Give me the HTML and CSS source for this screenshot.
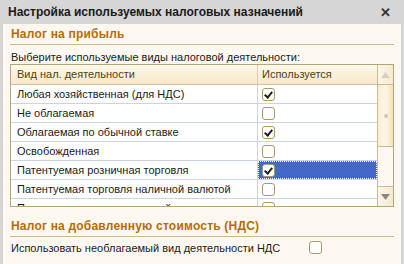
FILE: index.html
```html
<!DOCTYPE html>
<html>
<head>
<meta charset="utf-8">
<link rel="stylesheet" href="styles.css">
</head>
<body>
<div class="window">
  <div class="titlebar">
    <span class="title">Настройка используемых налоговых назначений</span>
    <span class="close">✕</span>
  </div>
  <div class="content">
    <div class="section-head">Налог на прибыль</div>
    <div class="hint">Выберите используемые виды налоговой деятельности:</div>
    <div class="table">
      <div class="grid">
        <div class="row head">
          <div class="c1">Вид нал. деятельности</div>
          <div class="c2">Используется</div>
        </div>
        <div class="row">
          <div class="c1">Любая хозяйственная (для НДС)</div>
          <div class="c2"><span class="cb on"></span></div>
        </div>
        <div class="row">
          <div class="c1">Не облагаемая</div>
          <div class="c2"><span class="cb"></span></div>
        </div>
        <div class="row">
          <div class="c1">Облагаемая по обычной ставке</div>
          <div class="c2"><span class="cb on"></span></div>
        </div>
        <div class="row">
          <div class="c1">Освобожденная</div>
          <div class="c2"><span class="cb"></span></div>
        </div>
        <div class="row">
          <div class="c1">Патентуемая розничная торговля</div>
          <div class="c2 sel"><span class="cb on"></span></div>
        </div>
        <div class="row">
          <div class="c1">Патентуемая торговля наличной валютой</div>
          <div class="c2"><span class="cb"></span></div>
        </div>
        <div class="row">
          <div class="c1">Патентуемая торговля прочей</div>
          <div class="c2"><span class="cb"></span></div>
        </div>
      </div>
      <div class="scrollbar">
        <div class="sb-btn up"><svg width="9" height="6" viewBox="0 0 9 6"><path d="M0 6 L4.5 0 L9 6 Z" fill="#d8d0bc"/></svg></div>
        <div class="sb-thumb"><span class="grip"></span></div>
        <div class="sb-track"></div>
        <div class="sb-btn down"><svg width="9" height="6" viewBox="0 0 9 6"><path d="M0 0 L4.5 6 L9 0 Z" fill="#8a8680"/></svg></div>
      </div>
    </div>
    <div class="section-head second">Налог на добавленную стоимость (НДС)</div>
    <div class="option">
      <span class="opt-label">Использовать необлагаемый вид деятельности НДС</span>
      <span class="cb"></span>
    </div>
  </div>
</div>
</body>
</html>
```
FILE: styles.css
```css
html, body {
  margin: 0;
  padding: 0;
}
body {
  width: 404px;
  height: 264px;
  overflow: hidden;
  background: #d6d6d6;
  font-family: "Liberation Sans", Arial, sans-serif;
  font-size: 11px;
  color: #1c1a14;
}
.window {
  width: 404px;
  height: 264px;
  display: flex;
  flex-direction: column;
}
.titlebar {
  height: 24px;
  flex: none;
  display: flex;
  align-items: center;
  justify-content: space-between;
  padding: 0 13px 0 8px;
  background: #d6d6d6;
}
.title {
  font-weight: bold;
  font-size: 12px;
  color: #1a1a1a;
}
.close {
  font-size: 13px;
  font-weight: bold;
  color: #333;
}
.content {
  flex: 1;
  margin: 0 3px;
  background: #fdf9f2;
  padding: 0 7px 0 7px;
}
.section-head {
  height: 19px;
  padding-top: 1px;
  line-height: 19px;
  font-weight: bold;
  font-size: 12px;
  color: #b46d09;
  border-bottom: 1px solid #c8ba8c;
  padding-left: 1px;
  letter-spacing: 0.2px;
}
.hint {
  height: 19px;
  line-height: 24px;
  padding-left: 1px;
}
.table {
  height: 141px;
  border: 1px solid #b3a77a;
  display: flex;
  overflow: hidden;
  background: #fff;
}
.grid {
  flex: 1;
  display: flex;
  flex-direction: column;
}
.row {
  height: 18px;
  flex: none;
  display: flex;
  border-bottom: 1px solid #cbd3dd;
}
.row.head {
  height: 19px;
  background: linear-gradient(to bottom, #fff8ec, #f8e8c8);
  border-bottom: 1px solid #cbc3a8;
  color: #4f3f0e;
}
.c1 {
  width: 240px;
  padding-left: 6px;
  line-height: 18px;
  border-right: 1px solid #cbd3dd;
  white-space: nowrap;
  overflow: hidden;
}
.head .c1 {
  line-height: 19px;
  border-right-color: #d8ceb0;
}
.c2 {
  flex: 1;
  padding-left: 4px;
  line-height: 18px;
  display: flex;
  align-items: center;
}
.head .c2 {
  line-height: 19px;
}
.c2.sel {
  background: #4468c8;
  outline: 1px dotted #ffffff;
  outline-offset: -1px;
}
.cb {
  display: inline-block;
  width: 11px;
  height: 11px;
  border: 1px solid #a69a6c;
  border-radius: 3px;
  background: #fff;
  position: relative;
}
.cb.on::after {
  content: "";
  position: absolute;
  left: 3px;
  top: 1px;
  width: 3px;
  height: 6px;
  border: solid #1e1e1e;
  border-width: 0 2px 2px 0;
  transform: rotate(40deg);
}
.scrollbar {
  width: 15px;
  flex: none;
  border-left: 1px solid #c8bc90;
  display: flex;
  flex-direction: column;
  background: #fdf9f2;
}
.sb-btn {
  height: 19px;
  display: flex;
  align-items: center;
  justify-content: center;
  background: linear-gradient(to right, #fcf6e8, #f5ead0);
}
.sb-btn.up {
  border-bottom: 1px solid #c8bc90;
}
.sb-btn.down {
  border-top: 1px solid #c8bc90;
}
.sb-thumb {
  height: 61px;
  background: linear-gradient(to right, #f8edd2, #fdf6e6 50%, #f3e2b8);
  border-bottom: 1px solid #c8bc90;
  display: flex;
  align-items: center;
  justify-content: center;
}
.grip {
  width: 4px;
  height: 4px;
  border-radius: 2px;
  background: #d2c8b0;
}
.sb-track {
  flex: 1;
  background: #fdf9f2;
}
.section-head.second {
  margin-top: 9px;
}
.option {
  height: 21px;
  display: flex;
  align-items: center;
  padding-left: 1px;
}
.opt-label {
  width: 298px;
}
```
